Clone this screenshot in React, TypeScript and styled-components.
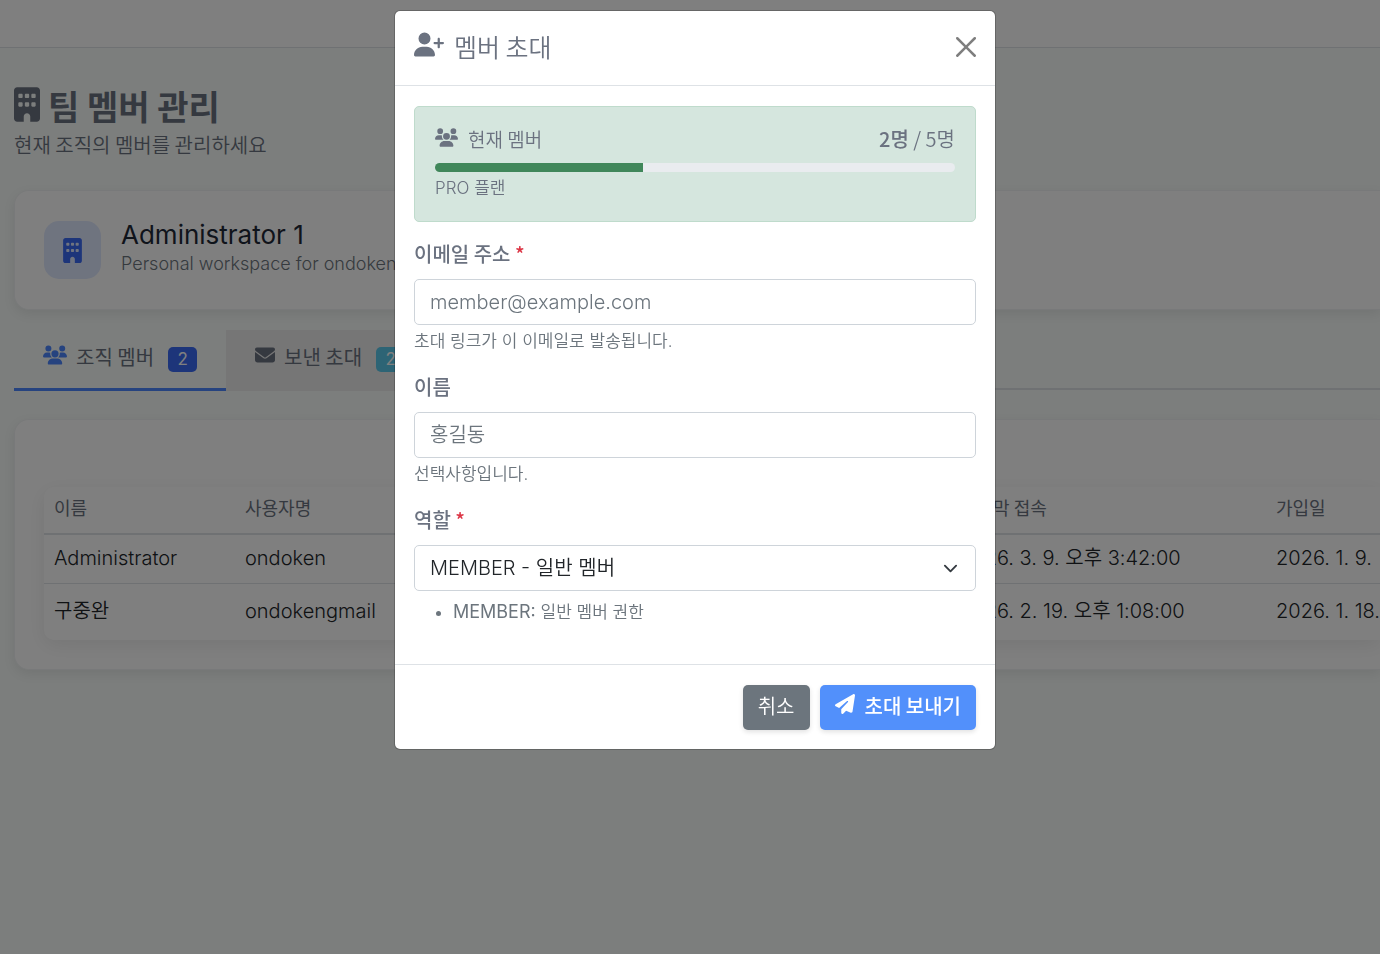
import React, { useState } from "react";
import styled, { createGlobalStyle, css } from "styled-components";
import { FaBuilding, FaEnvelope, FaPaperPlane, FaUserPlus, FaUsers } from "react-icons/fa6";

const color = {
  text: "#6b7280",
  strong: "#1f2937",
  body: "#212529",
  muted: "#6c757d",
  line: "#dee2e6",
  field: "#ced4da",
  primary: "#3b6af5",
  accent: "#4c86ff",
  info: "#5ac8ea",
  danger: "#dc3545",
  success: "#40875a",
};

const hangul = `"Noto Sans CJK KR", Inter, sans-serif`;

const GlobalStyle = createGlobalStyle`
  *, *::before, *::after { box-sizing: border-box; }
  body {
    margin: 0;
    min-height: 100vh;
    background: #f8fcfa;
    color: ${color.text};
    font-family: Inter, "Noto Sans CJK KR", sans-serif;
    font-size: 20px;
    font-weight: 350;
    line-height: 30px;
  }
  h1, h2, p, ul { margin: 0; padding: 0; }
  button, input, select { font: inherit; }
`;

const Icon = styled.span<{ $w: number; $h: number; $color?: string }>`
  display: inline-flex;
  flex: none;
  color: ${(p) => p.$color ?? "inherit"};
  svg {
    width: ${(p) => p.$w}px;
    height: ${(p) => p.$h}px;
  }
`;

/* Icon that leads a line of text, lifted to the text's optical centre. */
const LeadIcon = styled(Icon)`
  padding-bottom: 4px;
`;

/* ---------- Page ---------- */

const TopBar = styled.header`
  height: 48px;
  background: #fff;
  border-bottom: 1px solid ${color.line};
`;

const Main = styled.main`
  padding: 33px 0 33px 14px;
`;

const PageTitle = styled.h1`
  display: flex;
  align-items: center;
  gap: 8px;
  font-family: ${hangul};
  font-size: 34px;
  font-weight: 700;
  line-height: 50px;
`;

const PageLead = styled.p`
  margin-bottom: 31px;
  font-family: ${hangul};
  line-height: 28px;
`;

const Card = styled.section`
  background: #fff;
  border: 1px solid #f1f3f4;
  border-right: 0;
  border-radius: 15px 0 0 15px;
  box-shadow: 0 4px 12px rgba(0, 0, 0, 0.08);
`;

const OrgCard = styled(Card)`
  display: flex;
  align-items: center;
  gap: 20px;
  padding: 30px 29px;
  margin-bottom: 20px;
`;

const OrgBadge = styled.div`
  display: flex;
  align-items: center;
  justify-content: center;
  width: 57px;
  height: 58px;
  border-radius: 15px;
  background: #dfe8ff;
`;

const OrgName = styled.h2`
  font-size: 26px;
  font-weight: 400;
  line-height: 28px;
  color: ${color.strong};
`;

const OrgDesc = styled.p`
  font-size: 18px;
  line-height: 30px;
  color: ${color.muted};
`;

const TabStrip = styled.div`
  display: flex;
  height: 60px;
  margin-bottom: 29px;
  border-bottom: 2px solid ${color.line};
`;

const Tab = styled.button<{ $active?: boolean }>`
  display: flex;
  align-items: center;
  gap: 9px;
  height: 61px;
  padding: 0 29px 4px;
  border: 0;
  border-bottom: 3px solid transparent;
  background: #ececec;
  color: ${color.text};
  font-family: ${hangul};
  font-weight: 400;
  ${(p) =>
    p.$active &&
    css`
      background: transparent;
      border-bottom-color: ${color.accent};
    `}
`;

const Count = styled.span<{ $color: string }>`
  min-width: 29px;
  margin: 4px 0 0 5px;
  border-radius: 5px;
  background: ${(p) => p.$color};
  color: #fff;
  font-family: Inter, sans-serif;
  font-size: 17px;
  line-height: 25px;
  text-align: center;
`;

const TableCard = styled(Card)`
  padding: 67px 0 29px 29px;
`;

const TableFrame = styled.div`
  border-radius: 10px 0 0 10px;
  box-shadow: 0 5px 20px rgba(0, 0, 0, 0.08);
`;

const Table = styled.table`
  width: 100%;
  table-layout: fixed;
  border-collapse: collapse;
  color: ${color.body};

  th,
  td {
    padding: 0 0 0 10px;
    text-align: left;
    white-space: nowrap;
    overflow: hidden;
  }
  th {
    height: 47px;
    padding-bottom: 6px;
    border-bottom: 2px solid ${color.line};
    color: ${color.text};
    font-family: ${hangul};
    font-size: 18px;
    font-weight: 400;
  }
  td {
    height: 49px;
    padding-bottom: 1px;
  }
  tbody tr + tr td {
    height: 57px;
    border-top: 1px solid ${color.line};
  }
`;

const Col = styled.col<{ $w?: number }>`
  width: ${(p) => (p.$w ? `${p.$w}px` : "auto")};
`;

/* ---------- Dialog ---------- */

const Backdrop = styled.div`
  position: fixed;
  inset: 0;
  display: flex;
  align-items: flex-start;
  justify-content: center;
  padding: 10px 0 10px 10px;
  background: rgba(0, 0, 0, 0.5);
  overflow: auto;
`;

const Dialog = styled.div`
  width: 100%;
  max-width: 602px;
  background: #fff;
  background-clip: padding-box;
  border: 1px solid rgba(0, 0, 0, 0.2);
  border-radius: 6px;
`;

const DialogHeader = styled.header`
  display: flex;
  align-items: center;
  justify-content: space-between;
  height: 75px;
  padding: 0 19px 2px;
  border-bottom: 1px solid ${color.line};
`;

const DialogTitle = styled.h2`
  display: flex;
  align-items: center;
  gap: 10px;
  padding-bottom: 2px;
  font-family: ${hangul};
  font-size: 25px;
  font-weight: 350;
  line-height: 38px;
`;

const CloseButton = styled.button`
  display: flex;
  padding: 0;
  border: 0;
  background: none;
  color: #000;
  opacity: 0.5;
`;

const DialogBody = styled.form`
  padding: 20px 19px 39px;
`;

const Usage = styled.div`
  margin-bottom: 20px;
  padding: 20px;
  background: #d5e6de;
  border: 1px solid #bfdbcc;
  border-radius: 5px;
`;

const UsageRow = styled.div`
  display: flex;
  justify-content: space-between;
  margin-bottom: 12px;
  font-family: ${hangul};
  font-size: 19px;
  line-height: 24px;
`;

const UsageCount = styled.span`
  font-size: 20px;

  strong {
    font-weight: 500;
  }
`;

const UsageLabel = styled.span`
  display: flex;
  align-items: center;
  gap: 10px;
`;

const Track = styled.div`
  height: 9px;
  margin-bottom: 4px;
  border-radius: 5px;
  background: #e9ecef;
  overflow: hidden;
`;

const Fill = styled.div`
  height: 100%;
  background: ${color.success};
`;

const Plan = styled.p`
  font-size: 17px;
  line-height: 25px;
`;

const Field = styled.div`
  margin-bottom: 20px;
  &:last-child {
    margin-bottom: 0;
  }
`;

const Label = styled.label`
  display: block;
  margin-bottom: 13px;
  font-family: ${hangul};
  font-weight: 500;
  line-height: 24px;
`;

const Required = styled.span`
  color: ${color.danger};
`;

const control = css`
  display: block;
  width: 100%;
  height: 46px;
  padding: 0 15px 1px;
  border: 1px solid ${color.field};
  border-radius: 5px;
  background: #fff;
  color: ${color.body};
`;

const TextInput = styled.input`
  ${control}
  &::placeholder {
    color: ${color.muted};
    opacity: 1;
  }
`;

const SelectBox = styled.div`
  display: grid;
  align-items: center;

  > * {
    grid-area: 1 / 1;
  }
  svg {
    justify-self: end;
    margin-right: 18px;
    pointer-events: none;
  }
`;

const Select = styled.select`
  ${control}
  appearance: none;
`;

const Hint = styled.p`
  margin-top: 2px;
  font-size: 17px;
  line-height: 28px;
  color: ${color.muted};
`;

const RoleNotes = styled.ul`
  margin-top: 8px;
  padding-left: 39px;
  font-size: 17px;
  line-height: 25px;
  color: ${color.muted};

  strong {
    font-size: 18px;
    font-weight: 400;
  }
`;

const DialogFooter = styled.footer`
  display: flex;
  justify-content: flex-end;
  gap: 10px;
  padding: 20px 19px 19px;
  border-top: 1px solid ${color.line};
`;

const Button = styled.button<{ $primary?: boolean }>`
  display: flex;
  align-items: center;
  gap: 10px;
  height: 45px;
  padding: 0 15px 3px;
  border: 0;
  border-radius: 5px;
  background: ${(p) => (p.$primary ? "#5290fb" : color.muted)};
  color: #fff;
  font-family: ${hangul};
  font-weight: ${(p) => (p.$primary ? 500 : 350)};
  box-shadow: 0 2px 5px rgba(0, 0, 0, 0.12);
`;

const members = [
  { name: "Administrator", user: "ondoken", seen: "2026. 3. 9. 오후 3:42:00", joined: "2026. 1. 9." },
  { name: "구중완", user: "ondokengmail", seen: "2026. 2. 19. 오후 1:08:00", joined: "2026. 1. 18." },
];

const usage = { used: 2, limit: 5 };

export default function App() {
  const [email, setEmail] = useState("");
  const [name, setName] = useState("");

  return (
    <>
      <GlobalStyle />
      <TopBar />
      <Main>
        <PageTitle>
          <LeadIcon $w={26} $h={35}><FaBuilding /></LeadIcon>
          팀 멤버 관리
        </PageTitle>
        <PageLead>현재 조직의 멤버를 관리하세요</PageLead>

        <OrgCard>
          <OrgBadge>
            <Icon $w={19} $h={25} $color={color.primary}><FaBuilding /></Icon>
          </OrgBadge>
          <div>
            <OrgName>Administrator 1</OrgName>
            <OrgDesc>Personal workspace for ondoken</OrgDesc>
          </div>
        </OrgCard>

        <TabStrip role="tablist">
          <Tab type="button" role="tab" aria-selected="true" $active>
            <LeadIcon $w={24} $h={20} $color={color.accent}><FaUsers /></LeadIcon>
            조직 멤버
            <Count $color={color.primary}>2</Count>
          </Tab>
          <Tab type="button" role="tab" aria-selected="false">
            <LeadIcon $w={20} $h={20}><FaEnvelope /></LeadIcon>
            보낸 초대
            <Count $color={color.info}>2</Count>
          </Tab>
        </TabStrip>

        <TableCard>
          <TableFrame>
            <Table>
              <colgroup>
                <Col $w={191} />
                <Col $w={715} />
                <Col $w={316} />
                <Col />
              </colgroup>
              <thead>
                <tr>
                  <th>이름</th>
                  <th>사용자명</th>
                  <th>마지막 접속</th>
                  <th>가입일</th>
                </tr>
              </thead>
              <tbody>
                {members.map((m) => (
                  <tr key={m.user}>
                    <td>{m.name}</td>
                    <td>{m.user}</td>
                    <td>{m.seen}</td>
                    <td>{m.joined}</td>
                  </tr>
                ))}
              </tbody>
            </Table>
          </TableFrame>
        </TableCard>
      </Main>

      <Backdrop>
        <Dialog role="dialog" aria-modal="true" aria-labelledby="invite-title">
          <DialogHeader>
            <DialogTitle id="invite-title">
              <LeadIcon $w={30} $h={25}><FaUserPlus /></LeadIcon>
              멤버 초대
            </DialogTitle>
            <CloseButton type="button" aria-label="닫기">
              <svg width="20" height="20" viewBox="0 0 16 16" fill="currentColor">
                <path d="M.293.293a1 1 0 0 1 1.414 0L8 6.586 14.293.293a1 1 0 1 1 1.414 1.414L9.414 8l6.293 6.293a1 1 0 0 1-1.414 1.414L8 9.414l-6.293 6.293a1 1 0 0 1-1.414-1.414L6.586 8 .293 1.707a1 1 0 0 1 0-1.414z" />
              </svg>
            </CloseButton>
          </DialogHeader>

          <DialogBody id="invite-form" onSubmit={(e) => e.preventDefault()}>
            <Usage>
              <UsageRow>
                <UsageLabel>
                  <LeadIcon $w={23} $h={19}><FaUsers /></LeadIcon>
                  현재 멤버
                </UsageLabel>
                <UsageCount><strong>{usage.used}명</strong> / {usage.limit}명</UsageCount>
              </UsageRow>
              <Track>
                <Fill style={{ width: `${(usage.used / usage.limit) * 100}%` }} />
              </Track>
              <Plan>PRO 플랜</Plan>
            </Usage>

            <Field>
              <Label htmlFor="email">이메일 주소 <Required>*</Required></Label>
              <TextInput id="email" type="email" placeholder="member@example.com" value={email} onChange={(e) => setEmail(e.target.value)} />
              <Hint>초대 링크가 이 이메일로 발송됩니다.</Hint>
            </Field>

            <Field>
              <Label htmlFor="name">이름</Label>
              <TextInput id="name" type="text" placeholder="홍길동" value={name} onChange={(e) => setName(e.target.value)} />
              <Hint>선택사항입니다.</Hint>
            </Field>

            <Field>
              <Label htmlFor="role">역할 <Required>*</Required></Label>
              <SelectBox>
                <Select id="role" defaultValue="MEMBER">
                  <option value="MEMBER">MEMBER - 일반 멤버</option>
                </Select>
                <svg width="15" height="15" viewBox="0 0 16 16" fill="none" stroke="#343a40" strokeWidth="2" strokeLinecap="round" strokeLinejoin="round">
                  <path d="m2 5 6 6 6-6" />
                </svg>
              </SelectBox>
              <RoleNotes>
                <li><strong>MEMBER:</strong> 일반 멤버 권한</li>
              </RoleNotes>
            </Field>
          </DialogBody>

          <DialogFooter>
            <Button type="button">취소</Button>
            <Button type="submit" form="invite-form" $primary>
              <LeadIcon $w={20} $h={20}><FaPaperPlane /></LeadIcon>
              초대 보내기
            </Button>
          </DialogFooter>
        </Dialog>
      </Backdrop>
    </>
  );
}
